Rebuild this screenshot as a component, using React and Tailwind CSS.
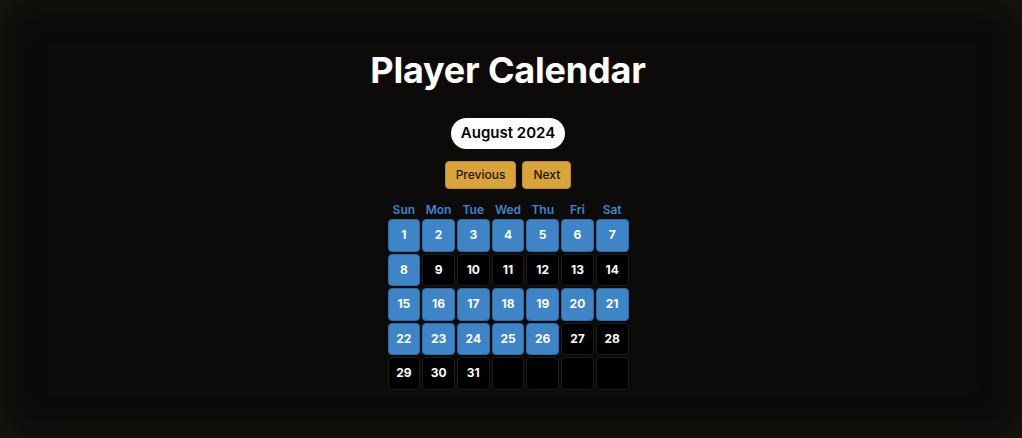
export default function App() {
  const days = ["Sun", "Mon", "Tue", "Wed", "Thu", "Fri", "Sat"];
  const played = [1, 2, 3, 4, 5, 6, 7, 8, 15, 16, 17, 18, 19, 20, 21, 22, 23, 24, 25, 26];

  const cells = [];
  for (let d = 1; d <= 31; d++) cells.push(d);
  while (cells.length < 35) cells.push(null);

  return (
    <div
      className="min-h-screen w-full bg-[#0c0b09] shadow-[inset_0_0_40px_rgba(60,55,48,0.28)] flex flex-col items-center pr-[6px] text-white"
      style={{ fontFamily: "Inter, 'Noto Sans', sans-serif" }}
    >
      <h1 className="mt-[48px] text-[36px] leading-[44px] font-bold tracking-[-0.2px]">
        Player Calendar
      </h1>
      <div className="mt-[26px] bg-white text-black rounded-full px-[10px] h-[31px] flex items-center text-[15px] font-semibold">
        August 2024
      </div>
      <div className="mt-[12px] flex gap-[6px]">
        <button className="h-[28px] px-[10px] rounded-[4px] bg-[#d9a43a] border border-[#b88a2e] text-[#1b1408] text-[12px] font-medium">
          Previous
        </button>
        <button className="h-[28px] px-[10px] rounded-[4px] bg-[#d9a43a] border border-[#b88a2e] text-[#1b1408] text-[12px] font-medium">
          Next
        </button>
      </div>
      <div className="mt-[13px] w-[241px] grid grid-cols-7 gap-x-[2px]">
        {days.map((d) => (
          <div key={d} className="text-center text-[12px] leading-[16px] font-semibold text-[#3d86c8]">
            {d}
          </div>
        ))}
      </div>
      <div className="mt-[1px] w-[241px] grid grid-cols-7 gap-[2px]">
        {cells.map((d, i) => {
          const on = d && played.includes(d);
          return (
            <div
              key={i}
              className={
                on
                  ? "h-[32.5px] rounded-[4px] bg-[#3d85c6] border border-[#2f6aa0] flex items-center justify-center text-[12px] font-bold"
                  : "h-[32.5px] rounded-[4px] bg-black border border-[#1c1c1c] flex items-center justify-center text-[12px] font-bold"
              }
            >
              {d}
            </div>
          );
        })}
      </div>
    </div>
  );
}
